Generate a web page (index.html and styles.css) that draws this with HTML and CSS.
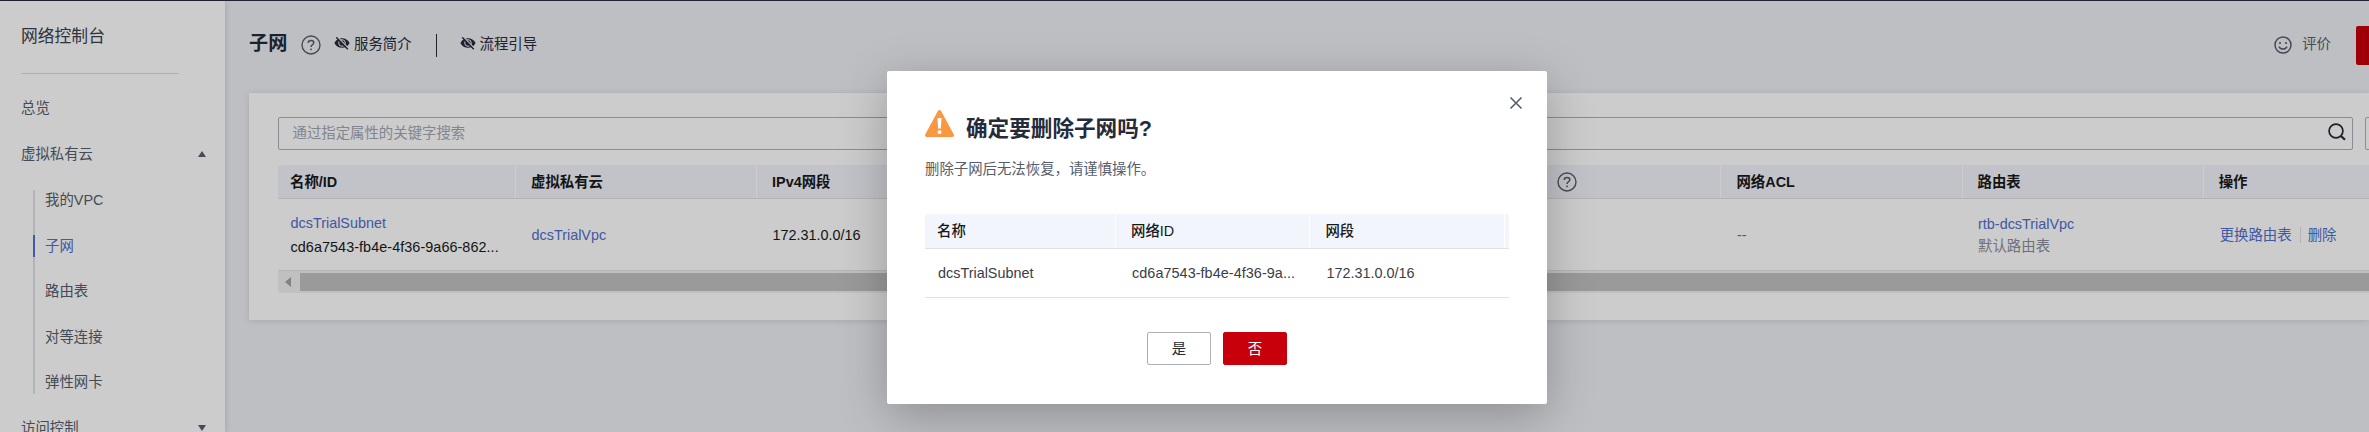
FILE: index.html
```html
<!DOCTYPE html>
<html lang="zh-CN">
<head>
<meta charset="utf-8">
<title>网络控制台</title>
<link rel="stylesheet" href="styles.css">
</head>
<body>
<svg class="defs" aria-hidden="true">
  <symbol id="i-help" viewBox="0 0 20 20"><circle cx="10" cy="10" r="9" fill="none" stroke="currentColor" stroke-width="1.4"/><path d="M7.2 8.1c0-1.7 1.2-2.7 2.8-2.7s2.8 1 2.8 2.4c0 1.900-2.8 2-2.800 4.100" fill="none" stroke="currentColor" stroke-width="1.500"/><rect x="9.200" y="13.600" width="1.600" height="1.600" fill="currentColor"/></symbol>
  <symbol id="i-eye" viewBox="0 0 16 13"><path d="M.4 6C2.200 2.700 4.800 1.300 8 1.300s5.800 1.500 7.600 4.700C13.800 9.400 11.200 10.800 8 10.800S2.200 9.300.4 6z" fill="currentColor"/><circle cx="8" cy="6" r="3.300" fill="none" stroke="#eeeff4" stroke-width="1"/><path d="M3.300-.3l11 11.600" stroke="#eeeff4" stroke-width="1.300"/><path d="M2.200.300l11.600 12" stroke="currentColor" stroke-width="1.400"/></symbol>
</svg>
<div class="page">
  <div class="topline"></div>
  <aside class="sidebar">
    <h2 class="side-title">网络控制台</h2>
    <nav class="side-nav">
      <a class="item">总览</a>
      <a class="item">虚拟私有云<span class="tri up"></span></a>
      <div class="sub">
        <a class="item">我的VPC</a>
        <a class="item active">子网</a>
        <a class="item">路由表</a>
        <a class="item">对等连接</a>
        <a class="item">弹性网卡</a>
      </div>
      <a class="item">访问控制<span class="tri down"></span></a>
    </nav>
  </aside>
  <main class="main">
    <header class="head">
      <h1>子网</h1>
      <svg class="help"><use href="#i-help"/></svg>
      <a class="guide"><svg class="eye"><use href="#i-eye"/></svg>服务简介</a>
      <i class="bar"></i>
      <a class="guide"><svg class="eye"><use href="#i-eye"/></svg>流程引导</a>
      <a class="rate"><svg class="smile" viewBox="0 0 18 18"><g fill="none" stroke="currentColor" stroke-width="1.500"><circle cx="9" cy="9" r="8"/><path d="M5 10.600c.8 1.700 2.200 2.400 4 2.400s3.200-.7 4-2.400"/></g><g fill="currentColor"><circle cx="6" cy="7" r="1.100"/><circle cx="12" cy="7" r="1.100"/></g></svg>评价</a>
      <button class="create"></button>
    </header>
    <section class="card">
      <div class="tools">
        <div class="search"><span>通过指定属性的关键字搜索</span><svg class="mag" viewBox="0 0 18 18"><circle cx="8" cy="8" r="6.900" fill="none" stroke="currentColor" stroke-width="1.700"/><path d="M12.700 12.800l4.300 4" stroke="currentColor" stroke-width="2.200"/></svg></div>
        <div class="square"></div>
      </div>
      <div class="table">
        <div class="tr th">
          <div>名称/ID</div><div>虚拟私有云</div><div>IPv4网段</div><div></div><div></div>
          <div class="tip"><svg class="help"><use href="#i-help"/></svg></div>
          <div>网络ACL</div><div>路由表</div><div>操作</div>
        </div>
        <div class="tr td">
          <div><a class="link">dcsTrialSubnet</a><span class="id">cd6a7543-fb4e-4f36-9a66-862...</span></div>
          <div><a class="link">dcsTrialVpc</a></div>
          <div>172.31.0.0/16</div><div></div><div></div><div></div>
          <div><a class="link">--</a></div>
          <div><a class="link">rtb-dcsTrialVpc</a><span class="muted">默认路由表</span></div>
          <div class="ops"><a class="link">更换路由表</a><i></i><a class="link">删除</a></div>
        </div>
        <div class="scroll"><span class="arrow"></span><span class="thumb"></span></div>
      </div>
    </section>
  </main>
</div>
<div class="mask">
  <div class="dialog">
    <svg class="close" viewBox="0 0 14 14"><path d="M1.500 1.500l11 11M12.500 1.500l-11 11" stroke="currentColor" stroke-width="1.600"/></svg>
    <div class="dlg-title">
      <svg class="warn" viewBox="0 0 29 27"><path d="M12.900.9c.7-1.200 2.500-1.200 3.200 0l12.700 23.700c.6 1.200-.2 2.400-1.400 2.400H1.600C.4 27-.4 25.800.2 24.600z" fill="#fa9841"/><path d="M12.500 8h4l-.7 10.600h-2.600z" fill="#fff"/><rect x="12.700" y="20.600" width="3.600" height="3.200" rx=".5" fill="#fff"/></svg>
      <h3>确定要删除子网吗?</h3>
    </div>
    <p>删除子网后无法恢复，请谨慎操作。</p>
    <div class="dtable">
      <div class="dr dh"><div>名称</div><div>网络ID</div><div>网段</div><div></div></div>
      <div class="dr dd"><div>dcsTrialSubnet</div><div class="id">cd6a7543-fb4e-4f36-9a...</div><div>172.31.0.0/16</div></div>
    </div>
    <div class="btns"><button>是</button><button class="primary">否</button></div>
  </div>
</div>
</body>
</html>
```
FILE: styles.css
```css
* { box-sizing: border-box; }
body { margin: 0; height: 432px; overflow: hidden; position: relative; background: #eeeff4; color: #191919; font: 14.4px/22px "Liberation Sans", "Noto Sans CJK SC", sans-serif; }
h1, h2, h3, p { margin: 0; }
button { font: inherit; padding: 0; }
.defs { position: absolute; width: 0; height: 0; }

.page { display: grid; grid-template: 1px 431px / 225px 1fr; height: 432px; overflow: hidden; }
.topline { grid-column: 1 / 3; background: #282b40; }

.sidebar { background: #fff; padding: 11px 0 0 21px; color: #575d6c; box-shadow: 0 0 6px rgba(0,0,0,.16); overflow: hidden; }
.side-title { width: 158px; height: 62px; padding-top: 13px; border-bottom: 1px solid #dadbe0; font-size: 16.8px; line-height: 24px; font-weight: 400; color: #3b4050; }
.side-nav { padding-top: 12px; }
.item { display: flex; align-items: center; height: 45.6px; position: relative; }
.side-nav > .item:first-child { padding-bottom: 2px; }
.sub { position: relative; margin-left: 12px; padding-left: 12px; }
.sub::before { content: ""; position: absolute; left: 0; top: 13px; width: 2px; height: 204px; background: #dfe1e6; }
.sub .active { color: #526ecc; }
.sub .active::before { content: ""; position: absolute; left: -12px; top: 12px; width: 2px; height: 22px; background: #526ecc; }
.tri { margin-left: auto; margin-right: 19px; border: 4px solid transparent; }
.tri.up { border-bottom: 6px solid #575d6c; border-top: 0; }
.tri.down { border-top: 6px solid #575d6c; border-bottom: 0; }

.main { padding-left: 24px; min-width: 0; }
.head { display: flex; align-items: center; height: 92px; padding-bottom: 7px; color: #252b3a; }
.head h1 { font-size: 19.2px; line-height: 28px; font-weight: 700; width: 52px; }
.help { width: 20px; height: 20px; margin-top: 2px; color: #575d6c; flex: none; }
.guide { display: flex; align-items: center; margin-left: 14px; }
.eye { width: 16px; height: 13px; margin-right: 3px; overflow: visible; }
.guide .eye { margin-left: -1px; margin-right: 4px; }
.bar { width: 1px; height: 23px; background: #252b3a; margin: 3px 10px 0 24px; }
.rate { display: flex; align-items: center; gap: 10px; margin-left: auto; margin-right: 25px; color: #575d6c; }
.smile { width: 18px; height: 18px; margin-top: 2px; }
.create { width: 13px; height: 39px; margin-top: 3px; background: #c7000b; border: 0; border-radius: 2px 0 0 2px; }

.card { height: 227px; background: #fff; padding: 24px 0 0 29px; box-shadow: 0 1px 6px rgba(0,0,0,.12); overflow: hidden; }
.tools { display: flex; gap: 12px; }
.search { width: 2075px; height: 33px; border: 1px solid #adb0b8; border-radius: 2px; display: flex; align-items: center; justify-content: space-between; padding: 0 6px 1px 13.500px; color: #a3a7b2; flex: none; }
.mag { width: 18px; height: 18px; margin-top: -2px; color: #252b3a; }
.square { width: 40px; height: 33px; border: 1px solid #adb0b8; border-radius: 2px; flex: none; }
.table { margin-top: 15px; width: 2200px; }
.tr { display: grid; grid-template-columns: 237px repeat(8, 241.1px); }
.th { height: 34px; background: #f2f4fb; border-bottom: 1px solid #dfe1e6; border-radius: 4px 0 0 0; font-weight: 700; }
.th div { padding: 1px 0 0 15px; display: flex; align-items: center; border-left: 1.2px solid #fff; }
.th div:first-child { padding-left: 12px; border: 0; }
.th .tip { padding-left: 77px; }
.th .help { margin-top: -1px; }
.td { height: 72px; border-bottom: 1px solid #dfe1e6; }
.td > div { padding: 1px 0 0 16.500px; display: flex; flex-direction: column; justify-content: center; }
.td > div:first-child { padding-left: 12.500px; }
.link { color: #526ecc; }
.td .id { margin-top: 2px; }
.id { letter-spacing: .06px; }
.muted { color: #8a8e99; }
.td > .ops { flex-direction: row; justify-content: flex-start; align-items: center; padding-left: 17px; }
.ops i { width: 1px; height: 16px; background: #dfe1e6; margin: 0 7px 0 8px; }
.scroll { height: 22px; background: #f1f1f1; border-radius: 0 0 0 4px; display: flex; align-items: center; }
.arrow { border: 5px solid transparent; border-left: 0; border-right: 6px solid #a3a3a3; margin: 0 9px 0 7px; }
.thumb { flex: 1; height: 18px; background: #c1c1c1; }

.mask { position: absolute; inset: 0; background: rgba(0,0,0,.2); padding: 71px 0 0 887px; }
.dialog { position: relative; width: 660px; height: 333px; background: #fff; border-radius: 2px; box-shadow: 0 12px 48px rgba(0,0,0,.25); padding: 38px 38px 0; color: #191919; }
.close { position: absolute; right: 24.500px; top: 25px; width: 14px; height: 14px; color: #575d6c; }
.dlg-title { display: flex; height: 43px; }
.warn { width: 29px; height: 27px; margin: 1px 12px 0 0; }
h3 { font-size: 21.6px; line-height: 39px; font-weight: 700; color: #252b3a; }
.dialog p { height: 62px; padding-top: 6px; color: #575d6c; }
.dtable { width: 584px; }
.dr { display: grid; grid-template-columns: 190px 194.4px 194.4px 1fr; align-items: center; }
.dh { height: 35px; background: #f2f5fc; border-bottom: 1px solid #dfe1e6; border-radius: 4px 4px 0 0; font-weight: 500; align-items: stretch; }
.dh div { display: flex; align-items: center; padding-left: 15px; border-left: 1.200px solid #fff; }
.dh div:first-child { padding-left: 12px; border: 0; }
.dd { height: 49px; border-bottom: 1px solid #dfe1e6; color: #3a3d46; }
.dd div { padding-left: 17px; padding-bottom: 1px; }
.dd div:first-child { padding-left: 13px; }
.btns { display: flex; justify-content: center; gap: 12px; padding-top: 34px; }
.btns button { width: 64px; height: 33px; border: 1px solid #adb0b8; border-radius: 2px; background: #fff; color: #252b3a; }
.btns .primary { background: #c7000b; border-color: #c7000b; color: #fff; }
```
